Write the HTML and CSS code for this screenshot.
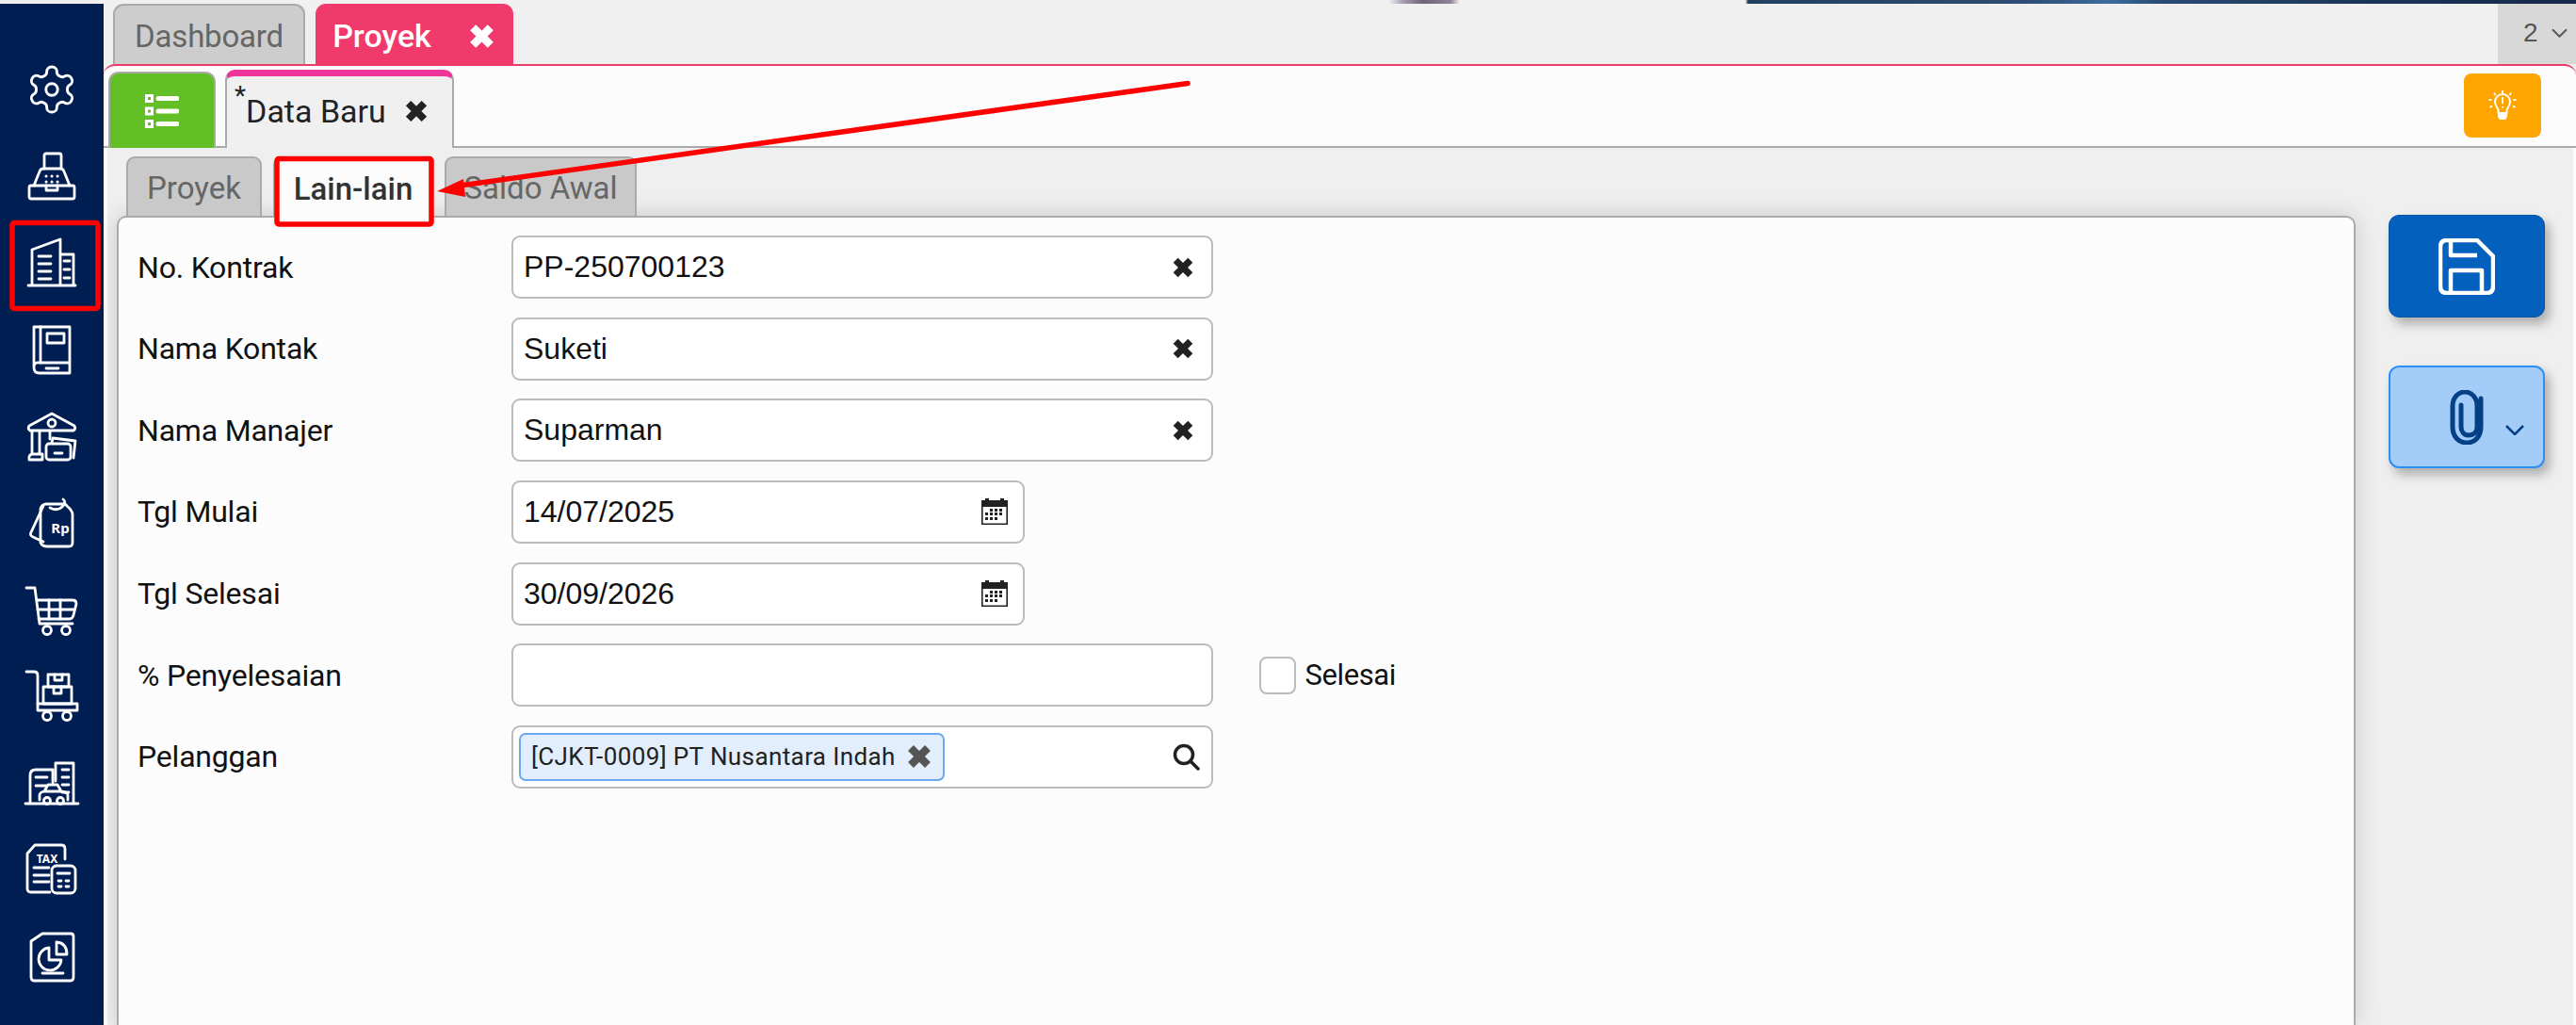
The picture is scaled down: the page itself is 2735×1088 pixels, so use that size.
FILE: index.html
```html
<!DOCTYPE html>
<html lang="id">
<head>
<meta charset="utf-8">
<title>Proyek</title>
<link rel="stylesheet" href="styles.css">
</head>
<body>
<svg class="defs" width="0" height="0">
  <symbol id="x" viewBox="0 0 20 20"><path d="M4 4L16 16M16 4L4 16"/></symbol>
  <symbol id="cal" viewBox="0 0 28 28">
    <path class="cal-frame" d="M.8 5.500h26.400v21.700H.8z"/>
    <path class="cal-top" d="M0 2h4V0h4v2h12V0h4v2h4v7H0z"/>
    <path class="cal-dots" d="M9 11h3v3H9zM14 11h3v3h-3zM19 11h3v3h-3zM4 15h3v3H4zM9 15h3v3H9zM14 15h3v3h-3zM19 15h3v3h-3zM4 20h3v3H4zM9 20h3v3H9zM14 20h3v3h-3z"/>
  </symbol>
</svg>

<div class="strip"></div>
<div class="shell">
  <nav class="sidebar">
    <svg class="nav-ico" viewBox="0 0 60 60"><g transform="translate(1.2 1.2) scale(2.4)"><path class="gear" d="M12.22 2h-.44a2 2 0 0 0-2 2v.18a2 2 0 0 1-1 1.73l-.43.25a2 2 0 0 1-2 0l-.15-.08a2 2 0 0 0-2.73.73l-.22.38a2 2 0 0 0 .73 2.73l.15.1a2 2 0 0 1 1 1.72v.51a2 2 0 0 1-1 1.74l-.15.09a2 2 0 0 0-.73 2.73l.22.38a2 2 0 0 0 2.73.73l.15-.08a2 2 0 0 1 2 0l.43.25a2 2 0 0 1 1 1.73V20a2 2 0 0 0 2 2h.44a2 2 0 0 0 2-2v-.18a2 2 0 0 1 1-1.73l.43-.25a2 2 0 0 1 2 0l.15.08a2 2 0 0 0 2.73-.73l.22-.39a2 2 0 0 0-.73-2.73l-.15-.08a2 2 0 0 1-1-1.74v-.5a2 2 0 0 1 1-1.74l.15-.09a2 2 0 0 0 .73-2.73l-.22-.38a2 2 0 0 0-2.73-.73l-.15.08a2 2 0 0 1-2 0l-.43-.25a2 2 0 0 1-1-1.73V4a2 2 0 0 0-2-2z"/><circle class="gear" cx="12" cy="12" r="2.6"/></g></svg>
    <svg class="nav-ico" viewBox="0 0 60 60"><path d="M22 22V8q0-2 2-2h14q2 0 2 2v14"/><path d="M11 40L17 25q1-3 4-3h18q3 0 4 3l6 15"/><rect x="6" y="40" width="48" height="14" rx="2"/><path d="M24 40v5h12v-5"/><path class="dots" d="M24 30h.1M30 30h.1M36 30h.1M24 36h.1M30 36h.1M36 36h.1"/></svg>
    <svg class="nav-ico" viewBox="0 0 60 60"><path d="M5 54h50M9 54V16L39 5v49M40 21h13v33"/><path d="M16 23h13M16 31h13M16 39h13M16 47h13M43 28h6M43 37h6M43 46h6"/></svg>
    <svg class="nav-ico" viewBox="0 0 60 60"><path d="M11 48V6h38v49H17q-6 0-6-6t6-5h32"/><path d="M18 6v38"/><rect x="25" y="13" width="18" height="10"/><path d="M24 50h13"/></svg>
    <svg class="nav-ico" viewBox="0 0 60 60"><path d="M30 6L6 19q-2 3 1 5h46q3-2 1-5z"/><circle cx="30" cy="16" r="4"/><path d="M9 25v24M17 25v24M28 25v8M6 55q-1-6 4-6h10v6z"/><rect x="24" y="38" width="26" height="17" rx="3"/><path d="M30 37l1-5 24 3-2 18M33 48h8"/></svg>
    <svg class="nav-ico" viewBox="0 0 60 60"><path d="M23 10h20q2 0 3 2 6 5 6 9v30q0 4-4 4H25q-5 0-7-4V15q1-4 5-5z"/><path d="M21 12L8 40q-2 3 2 5l11 5"/><path d="M28 14q8 4 13-1t1-8"/><text class="ico-text rp" x="39" y="41" text-anchor="middle">Rp</text></svg>
    <svg class="nav-ico" viewBox="0 0 60 60"><path d="M3 7h9l5 38h35M14 20h38q4 0 4 4l-3 12q-1 4-4 4H16"/><path d="M27 20v20M39 20v20M15 30h39"/><circle cx="25" cy="52" r="4.500"/><circle cx="45" cy="52" r="4.500"/></svg>
    <svg class="nav-ico" viewBox="0 0 60 60"><path d="M3 4h8q4 0 4 4v30"/><rect x="15" y="38" width="42" height="7"/><rect x="21" y="20" width="30" height="18"/><rect x="26" y="7" width="22" height="13"/><path d="M32 20v7h8v-7M33 7v6h8V7"/><circle cx="25" cy="51" r="4.500"/><circle cx="46" cy="51" r="4.500"/></svg>
    <svg class="nav-ico" viewBox="0 0 60 60"><path d="M2 52h56M7 52V22q0-6 6-6h18v14M34 28V9h19v43"/><path d="M13 24h12M13 33h11M41 16h7M41 24h7M41 32h7M41 40h7"/><path d="M17 48v-5q0-3 5-4l4-7h10l4 7q7 1 7 4v5M22 39h18"/><circle cx="25" cy="49" r="3.500"/><circle cx="39" cy="49" r="3.500"/></svg>
    <svg class="nav-ico" viewBox="0 0 60 60"><path d="M28 54H8q-4 0-4-4V13l8-9h28q4 0 4 4v11"/><path d="M11 28h16M11 36h16M11 43h16"/><rect x="30" y="26" width="25" height="29" rx="5"/><path d="M36 34h13M37 42h3M45 42h3M37 48h3M45 48h3"/><text class="ico-text tax" x="25" y="23" text-anchor="middle">TAX</text></svg>
    <svg class="nav-ico" viewBox="0 0 60 60"><path d="M20 6L8 14v38q0 4 3 4h39q3 0 3-4V9q0-3-3-3z"/><path d="M27 21a12 12 0 1 0 13 13H27z"/><path d="M35 15q11 1 11 13H35z"/><path d="M20 48h22"/></svg>
  </nav>

  <main class="main">
    <div class="tabbar">
      <div class="tab">Dashboard</div>
      <div class="tab tab-on">Proyek<svg class="x x-white"><use href="#x"/></svg></div>
      <div class="counter">2<svg class="chev" viewBox="0 0 18 10"><path d="M1 1l8 8 8-8"/></svg></div>
    </div>

    <section class="panel">
      <header class="head">
        <div class="list-btn">
          <svg class="list-ico" viewBox="0 0 36 36"><path class="sq" d="M1.500 1.500h6v6h-6zM1.500 15h6v6h-6zM1.500 28.500h6v6h-6z"/><path class="bar" d="M14 4.500h20M14 18h20M14 31.500h20"/></svg>
        </div>
        <div class="doc-tab"><span class="star">*</span><span>Data Baru</span><svg class="x x-doc"><use href="#x"/></svg></div>
        <div class="lamp">
          <svg class="lamp-ico" viewBox="0 0 30 32"><path class="ray" d="M15 0v3M6 2.500l1.500 2.500M24 2.500L22.500 5M.5 10h3M26.500 10h3M1.500 18l2.500-1.500M28.500 18L26 16.500"/><path class="bulb" d="M10.500 24v-3c0-2-3.500-4-3.500-9a8 8 0 0 1 16 0c0 5-3.500 7-3.500 9v3z"/><path class="ray" d="M15 7v7"/><path class="ray" d="M15 17v1.500"/><path class="base" d="M10 25h10v3l-2 3h-6l-2-3z"/></svg>
        </div>
      </header>

      <div class="content">
        <div class="form-col">
          <div class="subtabs">
            <div class="subtab w-a">Proyek</div>
            <div class="subtab subtab-on">Lain-lain</div>
            <div class="subtab w-c">Saldo Awal</div>
          </div>
          <div class="card">
            <div class="form">
              <div class="label">No. Kontrak</div>
              <div class="field"><span class="val">PP-250700123</span><svg class="x x-field"><use href="#x"/></svg></div>
              <div></div>
              <div class="label">Nama Kontak</div>
              <div class="field"><span class="val">Suketi</span><svg class="x x-field"><use href="#x"/></svg></div>
              <div></div>
              <div class="label">Nama Manajer</div>
              <div class="field"><span class="val">Suparman</span><svg class="x x-field"><use href="#x"/></svg></div>
              <div></div>
              <div class="label">Tgl Mulai</div>
              <div class="field field-date"><span class="val">14/07/2025</span><svg class="cal"><use href="#cal"/></svg></div>
              <div></div>
              <div class="label">Tgl Selesai</div>
              <div class="field field-date"><span class="val">30/09/2026</span><svg class="cal"><use href="#cal"/></svg></div>
              <div></div>
              <div class="label">% Penyelesaian</div>
              <div class="field"></div>
              <label class="check"><span class="box"></span><span class="check-text">Selesai</span></label>
              <div class="label">Pelanggan</div>
              <div class="field field-chip">
                <span class="chip">[CJKT-0009] PT Nusantara Indah<svg class="x x-chip"><use href="#x"/></svg></span>
                <svg class="search" viewBox="0 0 29 29"><circle cx="12" cy="12" r="9.500"/><path d="M19 19l8 8"/></svg>
              </div>
              <div></div>
            </div>
          </div>
        </div>
        <aside class="actions">
          <button class="act act-save" type="button">
            <svg class="save-ico" viewBox="0 0 60 60"><path d="M9 2h32l17 17v32q0 7-7 7H9q-7 0-7-7V9q0-7 7-7z"/><path d="M13 2v16h28M13 58V34h33v24"/></svg>
          </button>
          <button class="act act-clip" type="button">
            <svg class="clip-ico" viewBox="0 0 36 58"><path d="M33 9v30c0 10-6 17-15 17S3 49 3 39V17C3 8 9 2 16 2s13 6 13 15v22c0 6-4 9-9 9s-8-4-8-9V16"/></svg>
            <svg class="clip-chev" viewBox="0 0 20 11"><path d="M1 1l9 9 9-9"/></svg>
          </button>
        </aside>
      </div>
    </section>
  </main>
</div>

<svg class="marks" viewBox="0 0 2735 1088">
  <rect class="mark-box" x="13" y="236.500" width="91" height="91" rx="2"/>
  <rect class="mark-box" x="294" y="168.500" width="164" height="69.500" rx="2"/>
  <path class="mark-line" d="M1261 88.500L488 197"/>
  <path class="mark-head" d="M464 203L492 190L494 209z"/>
</svg>
</body>
</html>
```
FILE: styles.css
```css
* { box-sizing: border-box; }
html, body { margin: 0; height: 100%; overflow: hidden; }
body { width: 2735px; height: 1088px; position: relative; background: #f0f0f0; font-family: Roboto, "Liberation Sans", sans-serif; color: #111; display: flex; flex-direction: column; }
.defs { position: absolute; }

.strip { height: 4px; flex: none; background: linear-gradient(90deg, #f1f1f1 0, #f1f1f1 1474px, #a79bb0 1490px, #6f6478 1510px, #8d8198 1540px, #f1f1f1 1550px, #f1f1f1 1853px, #24405f 1856px, #2d4d74 2150px, #3c6c9e 2240px, #2a4c75 2290px, #1c3658 2500px, #16294a 2735px); }
.shell { flex: 1; display: flex; min-height: 0; }

/* sidebar */
.sidebar { width: 110px; flex: none; background: #011e52; display: flex; flex-direction: column; align-items: center; padding-top: 61px; }
.nav-ico { width: 60px; height: 60px; flex: none; margin-bottom: 32px; fill: none; stroke: #fff; stroke-width: 2.800; stroke-linecap: round; stroke-linejoin: round; }
.nav-ico .gear { stroke-width: 1.200; }
.nav-ico .dots { stroke-width: 3; }
.ico-text { fill: #fff; stroke: none; font-family: "Noto Sans", sans-serif; font-weight: 700; }
.rp { font-size: 15px; }
.tax { font-size: 12px; }

/* main */
.main { flex: 1; min-width: 0; display: flex; flex-direction: column; }
.tabbar { height: 64px; flex: none; display: flex; gap: 11px; padding-left: 10px; background: #f0f0f0; }
.tab { width: 204px; display: flex; align-items: center; justify-content: center; padding-top: 2px; background: #cdcdcd; border: 2px solid #aaa; border-bottom: 0; border-radius: 11px 11px 0 0; color: #666; font-size: 33px; letter-spacing: -.2px; }
.tab-on { width: 210px; background: #f03a6c; border-color: #f03a6c; color: #fff; font-weight: 500; font-size: 34px; letter-spacing: 0; gap: 38px; }
.counter { margin-left: auto; width: 83px; background: #d8d8d8; color: #555; font-family: "Liberation Sans", sans-serif; font-size: 28px; display: flex; align-items: center; gap: 14px; padding: 0 0 3px 27px; }
.chev { width: 17px; height: 10px; fill: none; stroke: #555; stroke-width: 2; }

.x { fill: none; stroke: #222; stroke-width: 5.500; stroke-linejoin: round; flex: none; }
.x-white { width: 31px; height: 31px; stroke: #fff; }
.x-doc { width: 28px; height: 28px; }
.x-field { width: 26px; height: 26px; margin-left: auto; margin-right: 17px; }
.x-chip { width: 30px; height: 30px; margin-left: 10px; stroke: #555; }

.panel { flex: 1; min-height: 0; display: flex; flex-direction: column; background: #fcfcfc; border-top: 2px solid #ee3a6a; border-radius: 12px 12px 0 0; padding: 0 3px 0 4px; }
.head { height: 87px; flex: none; display: flex; align-items: flex-end; border-bottom: 2px solid #aaa; margin: 0 -3px 0 -4px; padding: 0 37px 0 5px; position: relative; }
.list-btn { width: 114px; height: 81px; margin-bottom: -2px; background: #63bf26; border: 2px solid #aaa; border-bottom: 0; border-radius: 11px 11px 0 0; display: flex; align-items: center; justify-content: center; }
.list-ico { width: 36px; height: 36px; fill: none; }
.sq { stroke: #fff; stroke-width: 3; }
.bar { stroke: #fff; stroke-width: 5; stroke-linecap: round; }
.doc-tab { width: 243px; height: 83px; margin: 0 0 -2px 10px; background: #f0f0f0; border: 2px solid #aaa; border-top: 7px solid #ee3399; border-bottom: 0; border-radius: 11px 11px 0 0; display: flex; align-items: center; padding: 0 0 3px 8px; font-size: 34px; color: #222; }
.star { align-self: flex-start; font-size: 28px; line-height: 30px; margin: 6px 0 0 0; }
.x-doc { margin-left: 18px; }
.lamp { margin-left: auto; margin-bottom: 9px; width: 82px; height: 68px; background: #ffa500; border-radius: 8px; display: flex; align-items: center; justify-content: center; }
.lamp-ico { width: 30px; height: 32px; fill: none; stroke: #fff; }
.lamp-ico .ray { stroke-width: 1.800; stroke: #fff; }
.lamp-ico .bulb { stroke-width: 2; }
.lamp-ico .base { fill: #fff; stroke: none; }

.content { flex: 1; min-height: 0; display: flex; background: #efefef; padding-left: 10px; }
.form-col { flex: 1; min-width: 0; display: flex; flex-direction: column; padding-top: 9px; }
.subtabs { height: 63px; flex: none; display: flex; gap: 12px; padding-left: 10px; position: relative; z-index: 1; }
.subtab { display: flex; align-items: center; justify-content: center; background: #c9c9c9; border: 2px solid #aaa; border-bottom: 0; border-radius: 9px 9px 0 0; color: #666; font-size: 33px; padding-top: 1px; }
.w-a { width: 144px; }
.w-c { width: 204px; }
.subtab-on { width: 170px; height: 65px; background: #fcfcfc; color: #333; font-weight: 500; padding-top: 1px; }
.card { flex: 1; background: #fcfcfc; border: 2px solid #aaa; border-bottom: 0; border-radius: 10px 10px 0 0; box-shadow: 0 0 24px rgba(0, 0, 0, .16); padding: 19px 0 0 20px; }
.form { display: grid; grid-template-columns: 397px 744.500px 1fr; grid-auto-rows: 67px; row-gap: 19.670px; align-items: center; }
.label { font-size: 32px; letter-spacing: -.2px; color: #111; }
.field { height: 67px; background: #fff; border: 2px solid #bbb; border-radius: 9px; display: flex; align-items: center; padding-left: 11px; }
.val { font-family: "Liberation Sans", sans-serif; font-size: 32px; color: #111; }
.field-date { width: 545px; }
.cal { width: 28px; height: 28px; margin-left: auto; margin-right: 16px; }
.cal-frame { fill: none; stroke: #222; stroke-width: 1.600; }
.cal-top, .cal-dots { fill: #222; }
.check { display: flex; align-items: center; gap: 10px; margin-left: 49px; }
.box { width: 39px; height: 40px; background: #fff; border: 2px solid #bbb; border-radius: 8px; }
.check-text { font-size: 31px; letter-spacing: -.4px; color: #111; }
.field-chip { padding-left: 6px; }
.chip { height: 51px; padding: 0 10px 0 11px; background: #e2eefc; border: 2px solid #6ea8f0; border-radius: 7px; display: flex; align-items: center; font-size: 26px; color: #222; letter-spacing: .4px; }
.search { width: 29px; height: 29px; margin-left: auto; margin-right: 12px; fill: none; stroke: #222; stroke-width: 3.500; stroke-linecap: round; }

.actions { width: 166px; flex: none; margin: 0 30px 0 35px; padding-top: 71px; display: flex; flex-direction: column; gap: 51px; }
.act { height: 109px; padding: 0; border-radius: 11px; display: flex; align-items: center; justify-content: center; position: relative; box-shadow: 5px 7px 12px rgba(0, 0, 0, .28); }
.act-save { background: #0460bd; border: 1px solid #0756a6; }
.save-ico { width: 60px; height: 60px; fill: none; stroke: #fff; stroke-width: 4.500; stroke-linejoin: round; }
.act-clip { background: #a3cdf8; border: 2px solid #2b8ff5; }
.clip-ico { width: 36px; height: 58px; fill: none; stroke: #053f85; stroke-width: 5; stroke-linecap: round; }
.clip-chev { position: absolute; right: 20px; top: 61px; width: 20px; height: 11px; fill: none; stroke: #053f85; stroke-width: 2.500; }

.marks { position: absolute; left: 0; top: 0; width: 2735px; height: 1088px; pointer-events: none; z-index: 5; }
.mark-box { fill: none; stroke: #f00; stroke-width: 5.500; }
.mark-line { fill: none; stroke: #f00; stroke-width: 5.500; stroke-linecap: round; }
.mark-head { fill: #f00; }
```
